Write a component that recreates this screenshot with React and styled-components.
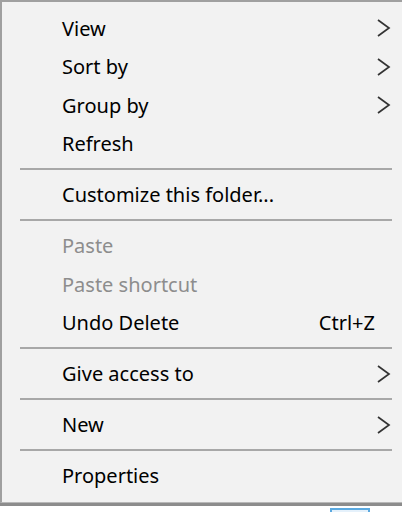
import styled, { createGlobalStyle } from "styled-components";

const GlobalStyle = createGlobalStyle`
  html, body {
    margin: 0;
    padding: 0;
    background: #ffffff;
    overflow: hidden;
  }
`;

const items = [
  { label: "View", sub: true },
  { label: "Sort by", sub: true },
  { label: "Group by", sub: true },
  { label: "Refresh" },
  "sep",
  { label: "Customize this folder..." },
  "sep",
  { label: "Paste", disabled: true },
  { label: "Paste shortcut", disabled: true },
  { label: "Undo Delete", shortcut: "Ctrl+Z" },
  "sep",
  { label: "Give access to", sub: true },
  "sep",
  { label: "New", sub: true },
  "sep",
  { label: "Properties" },
];

function Chevron() {
  return (
    <svg width="15" height="18" viewBox="0 0 15 18">
      <path d="M2 1 L13 9 L2 17" fill="none" stroke="#333333" strokeWidth="1.7" />
    </svg>
  );
}

export default function App() {
  return (
    <Page>
      <GlobalStyle />
      <Menu>
        {items.map((item, idx) =>
          item === "sep" ? (
            <Separator key={idx} />
          ) : (
            <Item key={idx} disabled={item.disabled}>
              <Label>{item.label}</Label>
              {item.shortcut && <Shortcut>{item.shortcut}</Shortcut>}
              {item.sub && (
                <Arrow>
                  <Chevron />
                </Arrow>
              )}
            </Item>
          )
        )}
      </Menu>
      <Desktop>
        <Selection />
      </Desktop>
    </Page>
  );
}

const Page = styled.div`
  width: 402px;
  height: 512px;
  overflow: hidden;
  background: #ffffff;
`;

const Menu = styled.div`
  width: 420px;
  box-sizing: border-box;
  padding: 7px 0 7px;
  background: #f2f2f2;
  border-top: 2px solid #a0a0a0;
  border-left: 2px solid #a0a0a0;
  border-bottom: 1px solid #b8b8b8;
  box-shadow: 0 3px 0 #8c8c8c;
  font-family: "Noto Sans", "Open Sans", sans-serif;
  font-size: 20px;
`;

const Item = styled.div`
  position: relative;
  height: 38.5px;
  display: flex;
  align-items: center;
  padding-left: 60px;
  color: ${({ disabled }) => (disabled ? "#8d8d8d" : "#000000")};
`;

const Label = styled.span`
  flex: 1;
`;

const Shortcut = styled.span`
  margin-right: 45px;
  text-align: right;
`;

const Arrow = styled.span`
  position: absolute;
  left: 374px;
  top: 10px;
  display: flex;
`;

const Separator = styled.div`
  height: 12.5px;
  display: flex;
  align-items: center;
  padding-left: 18px;
  width: 372px;
  &::after {
    content: "";
    flex: 1;
    height: 2px;
    background: #a8a8a8;
  }
`;

const Desktop = styled.div`
  position: relative;
  height: 20px;
  margin-top: 3px;
`;

const Selection = styled.div`
  position: absolute;
  left: 330px;
  top: 2px;
  width: 36px;
  height: 20px;
  border: 2px solid #5aa9e0;
  background: #e5f1fb;
`;
